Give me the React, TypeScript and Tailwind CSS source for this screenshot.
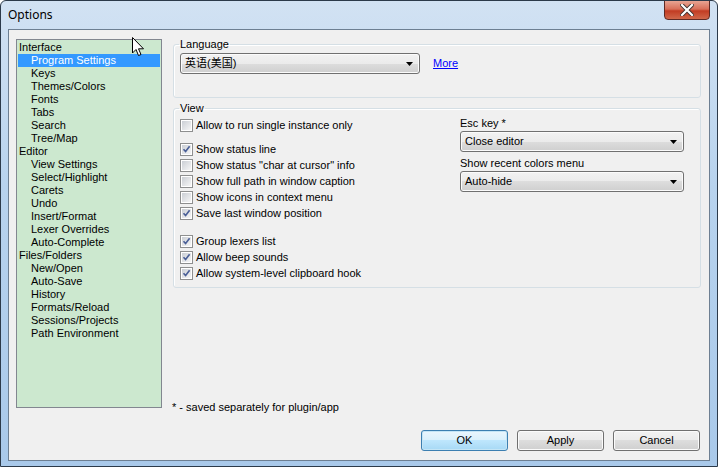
import React from "react";

const tree: { label: string; child?: boolean; selected?: boolean }[] = [
  { label: "Interface" },
  { label: "Program Settings", child: true, selected: true },
  { label: "Keys", child: true },
  { label: "Themes/Colors", child: true },
  { label: "Fonts", child: true },
  { label: "Tabs", child: true },
  { label: "Search", child: true },
  { label: "Tree/Map", child: true },
  { label: "Editor" },
  { label: "View Settings", child: true },
  { label: "Select/Highlight", child: true },
  { label: "Carets", child: true },
  { label: "Undo", child: true },
  { label: "Insert/Format", child: true },
  { label: "Lexer Overrides", child: true },
  { label: "Auto-Complete", child: true },
  { label: "Files/Folders" },
  { label: "New/Open", child: true },
  { label: "Auto-Save", child: true },
  { label: "History", child: true },
  { label: "Formats/Reload", child: true },
  { label: "Sessions/Projects", child: true },
  { label: "Path Environment", child: true },
];

const Check = ({ on, label }: { on?: boolean; label: string }) => (
  <div className="flex items-center h-[16px]">
    <div className="w-[13px] h-[13px] border border-[#8e8f8f] bg-white p-[1px] mr-[3px] shrink-0">
      <div className="w-full h-full bg-gradient-to-br from-[#cbcfd5] to-[#f6f6f6] relative">
        {on && (
          <svg viewBox="0 0 9 9" className="absolute inset-0 w-[9px] h-[9px]">
            <path d="M1.5 4.2 L3.6 6.6 L7.6 1.2" fill="none" stroke="#4a5f97" strokeWidth="1.6" />
          </svg>
        )}
      </div>
    </div>
    <span>{label}</span>
  </div>
);

const Combo = ({ text, w }: { text: string; w: string }) => (
  <div
    className={`${w} h-[21px] rounded-[3px] border border-[#707070] flex items-center pl-[4px] pr-[6px] bg-[linear-gradient(#f2f2f2_0%,#ebebeb_50%,#dddddd_50%,#cfcfcf_100%)] shadow-[inset_0_0_0_1px_#fbfbfb]`}
  >
    <span className="flex-1">{text}</span>
    <svg width="7" height="4" viewBox="0 0 7 4">
      <path d="M0 0 H7 L3.5 4 Z" fill="#000" />
    </svg>
  </div>
);

const Btn = ({ text, def }: { text: string; def?: boolean }) => (
  <div
    className={`w-[87px] h-[21px] rounded-[3px] border flex items-center justify-center ${
      def
        ? "border-[#3c7fb1] bg-[linear-gradient(#eaf6fd_0%,#d9f0fc_50%,#bee6fd_50%,#a7d9f5_100%)] shadow-[inset_0_0_0_1px_#c4e5f6]"
        : "border-[#707070] bg-[linear-gradient(#f2f2f2_0%,#ebebeb_50%,#dddddd_50%,#cfcfcf_100%)] shadow-[inset_0_0_0_1px_#fbfbfb]"
    }`}
  >
    {text}
  </div>
);

export default function App() {
  return (
    <div
      className="relative w-[718px] h-[467px] overflow-hidden rounded-t-[6px] border border-[#2c3a4a] bg-[linear-gradient(180deg,#d2e2f3_0%,#b8d3ee_40%,#a9c9ea_100%)] text-[11px] leading-[13px] text-black"
      style={{ fontFamily: '"Liberation Sans", "Noto Sans CJK SC", sans-serif' }}
    >
      {/* title bar */}
      <div className="h-[28px] flex items-start">
        <div
          className="pl-[7px] pt-[6px] text-[12px] leading-[16px] text-black"
          style={{ fontFamily: '"Noto Sans", sans-serif' }}
        >
          Options
        </div>
        <div className="ml-auto mr-[7px] mt-[-1px] w-[46px] h-[20px] rounded-b-[4px] border border-[#5e2a25] bg-[linear-gradient(#e8a493_0%,#d86f59_45%,#c23c23_55%,#d0674a_100%)] flex items-center justify-center">
          <svg width="14" height="12" viewBox="0 0 14 12">
            <path d="M2 1 L12 11 M12 1 L2 11" stroke="#40302e" strokeWidth="4" strokeLinecap="square" />
            <path d="M2 1 L12 11 M12 1 L2 11" stroke="#ffffff" strokeWidth="2.2" strokeLinecap="square" />
          </svg>
        </div>
      </div>

      {/* client */}
      <div className="mx-[7px] h-[432px] border border-[#6d7f92] bg-[#f0f0f0] flex flex-col">
        <div className="flex pt-[8px] pl-[7px]">
          {/* tree */}
          <div className="mt-[1px] w-[146px] h-[369px] border border-[#828790] bg-[#cce8cf] p-[1px]">
            {tree.map((t) => (
              <div
                key={t.label}
                className={`h-[13px] flex items-center whitespace-nowrap ${t.child ? "pl-[13px]" : "pl-[1px]"} ${
                  t.selected ? "bg-[#3399ff] text-white" : "text-[#000000]"
                }`}
              >
                {t.label}
              </div>
            ))}
          </div>

          {/* right pane */}
          <div className="ml-[11px] w-[528px] flex flex-col">
            <fieldset className="h-[60px] border border-[#d5dfe5] rounded-[3px] px-[6px] shadow-[inset_1px_1px_0_#ffffff]">
              <legend className="ml-[-1px] px-[1px] leading-[13px]">Language</legend>
              <div className="mt-[2px] flex items-center">
                <Combo text="英语(美国)" w="w-[240px]" />
                <span className="ml-[13px] text-[#0000ff] underline">More</span>
              </div>
            </fieldset>

            <fieldset className="mt-[4px] h-[186px] border border-[#d5dfe5] rounded-[3px] px-[6px] shadow-[inset_1px_1px_0_#ffffff]">
              <legend className="ml-[-1px] px-[1px] leading-[13px]">View</legend>
              <div className="flex">
                <div className="w-[280px] flex flex-col pt-[2px]">
                  <Check label="Allow to run single instance only" />
                  <div className="h-[8px]" />
                  <Check on label="Show status line" />
                  <Check label={'Show status "char at cursor" info'} />
                  <Check label="Show full path in window caption" />
                  <Check label="Show icons in context menu" />
                  <Check on label="Save last window position" />
                  <div className="h-[12px]" />
                  <Check on label="Group lexers list" />
                  <Check on label="Allow beep sounds" />
                  <Check on label="Allow system-level clipboard hook" />
                </div>
                <div className="flex flex-col">
                  <div className="h-[14px] flex items-center mt-[1px]">Esc key *</div>
                  <div className="mt-[1px]">
                    <Combo text="Close editor" w="w-[224px]" />
                  </div>
                  <div className="h-[14px] flex items-center mt-[4px]">Show recent colors menu</div>
                  <div className="mt-[1px]">
                    <Combo text="Auto-hide" w="w-[224px]" />
                  </div>
                </div>
              </div>
            </fieldset>
          </div>
        </div>

        <div className="flex-1 flex flex-col">
          <div className="ml-[163px] mt-[-7px] h-[13px]">* - saved separately for plugin/app</div>
          <div className="mt-auto mb-[9px] mr-[9px] flex justify-end gap-[9px]">
            <Btn text="OK" def />
            <Btn text="Apply" />
            <Btn text="Cancel" />
          </div>
        </div>
      </div>

      {/* mouse pointer */}
      <svg className="absolute left-[131px] top-[36px]" width="13" height="20" viewBox="0 0 13 20">
        <path
          d="M0.5 0.5 L0.5 16 L4 12.5 L6.5 18.5 L9 17.5 L6.5 11.8 L11.5 11.8 Z"
          fill="#ffffff"
          stroke="#000000"
          strokeWidth="1"
          strokeLinejoin="round"
        />
      </svg>
    </div>
  );
}
